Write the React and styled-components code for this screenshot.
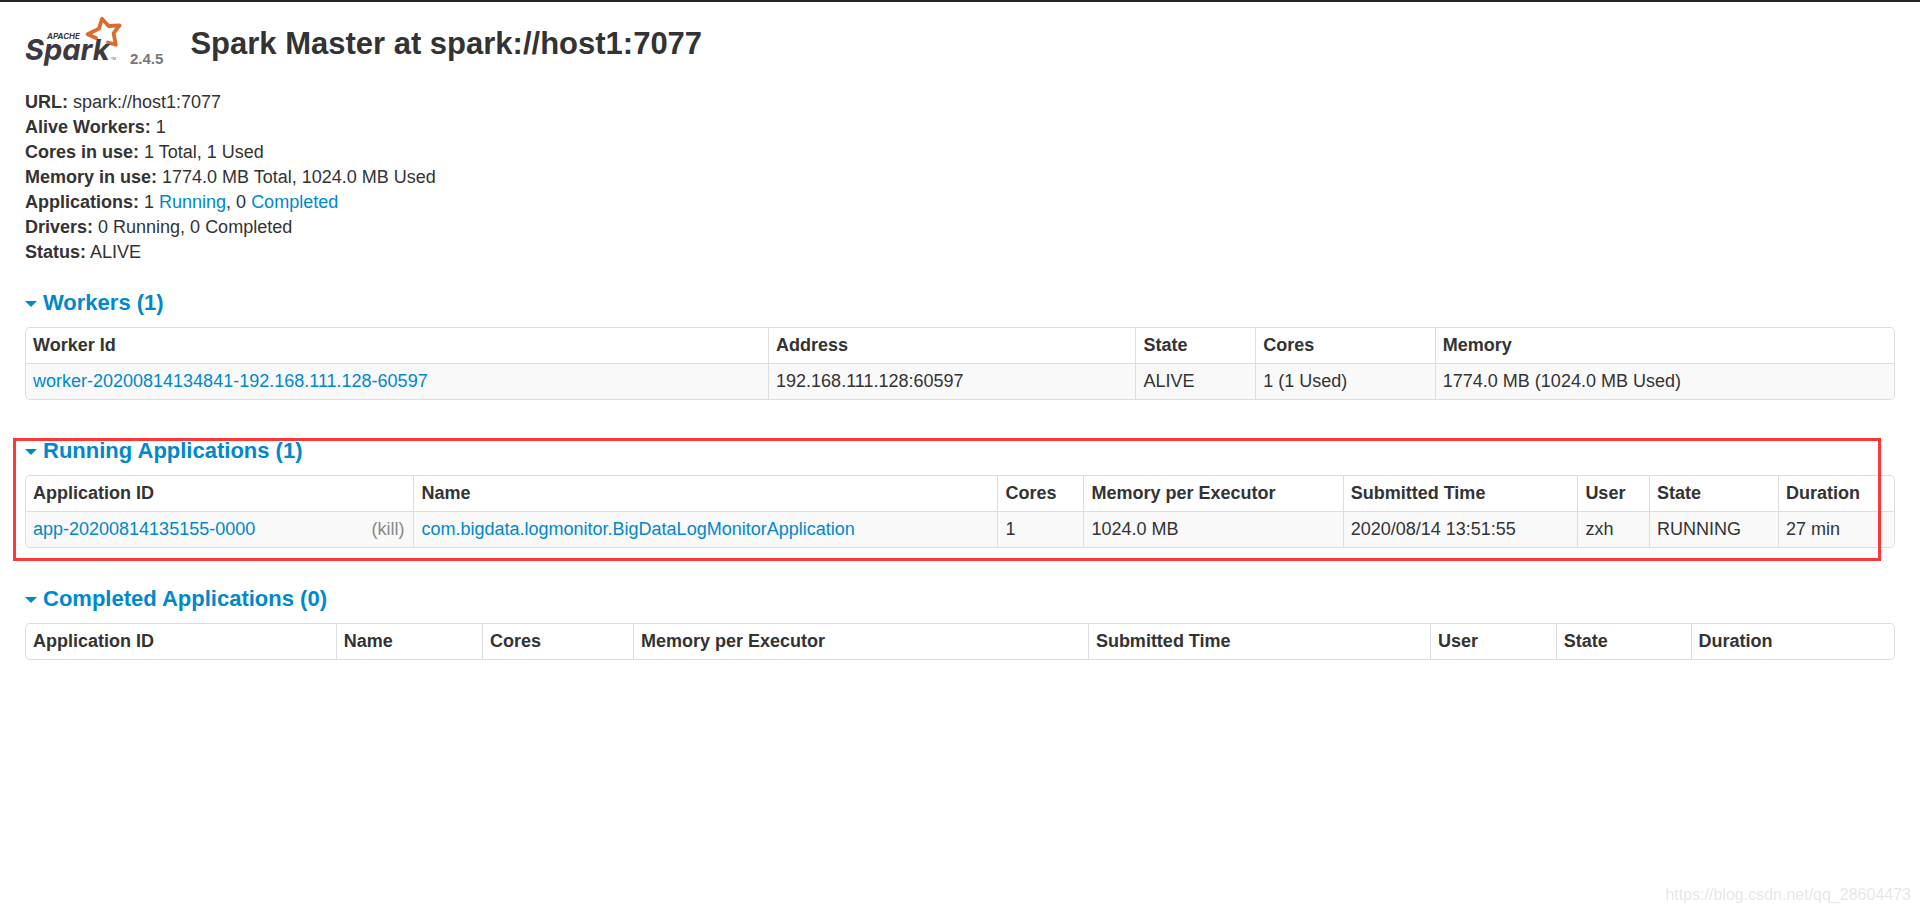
import styled, { createGlobalStyle } from "styled-components";

const workers = [
  {
    id: "worker-20200814134841-192.168.111.128-60597",
    address: "192.168.111.128:60597",
    state: "ALIVE",
    cores: "1 (1 Used)",
    memory: "1774.0 MB (1024.0 MB Used)",
  },
];

const runningApps = [
  {
    id: "app-20200814135155-0000",
    name: "com.bigdata.logmonitor.BigDataLogMonitorApplication",
    cores: "1",
    memory: "1024.0 MB",
    submitted: "2020/08/14 13:51:55",
    user: "zxh",
    state: "RUNNING",
    duration: "27 min",
  },
];

const workerHeaders = ["Worker Id", "Address", "State", "Cores", "Memory"];

const appHeaders = [
  "Application ID",
  "Name",
  "Cores",
  "Memory per Executor",
  "Submitted Time",
  "User",
  "State",
  "Duration",
];

function SparkLogo() {
  return (
    <svg width="98" height="54" viewBox="0 0 98 54" role="img" aria-label="Apache Spark">
      <path
        d="M83 28.5 L90.8 30.8 L88.6 19.2 L94.6 11.4 L83.6 12 L77 4.8 L74 14.6 L62.6 20.2 L71 24"
        fill="none"
        stroke="#dd6b2b"
        strokeWidth="3.8"
        strokeLinejoin="round"
        strokeLinecap="round"
      />
      <text x="22" y="25" fontFamily="Inter, sans-serif" fontSize="8" fontWeight="700" fontStyle="italic" fill="#3c3a3e">
        APACHE
      </text>
      <text x="0" y="46" fontFamily="Inter, sans-serif" fontSize="29" fontWeight="700" fontStyle="italic" fill="#3c3a3e">
        Spark
      </text>
      <text x="86" y="46" fontFamily="Inter, sans-serif" fontSize="3" fill="#3c3a3e">
        TM
      </text>
    </svg>
  );
}

function DataTable({ headers, children }) {
  return (
    <Table>
      <thead>
        <tr>
          {headers.map((header) => (
            <HeadCell key={header} scope="col">
              {header}
            </HeadCell>
          ))}
        </tr>
      </thead>
      <tbody>{children}</tbody>
    </Table>
  );
}

function SectionTitle({ children }) {
  return (
    <Title>
      <Toggle type="button">
        <Caret />
        {children}
      </Toggle>
    </Title>
  );
}

function App() {
  return (
    <>
      <GlobalStyle />
      <Page>
        <Header>
          <Brand href="#">
            <SparkLogo />
            <Version>2.4.5</Version>
          </Brand>
          <PageTitle>Spark Master at spark://host1:7077</PageTitle>
        </Header>

        <Summary>
          <li>
            <strong>URL:</strong> spark://host1:7077
          </li>
          <li>
            <strong>Alive Workers:</strong> 1
          </li>
          <li>
            <strong>Cores in use:</strong> 1 Total, 1 Used
          </li>
          <li>
            <strong>Memory in use:</strong> 1774.0 MB Total, 1024.0 MB Used
          </li>
          <li>
            <strong>Applications:</strong> 1 <Link href="#running">Running</Link>, 0{" "}
            <Link href="#completed">Completed</Link>
          </li>
          <li>
            <strong>Drivers:</strong> 0 Running, 0 Completed
          </li>
          <li>
            <strong>Status:</strong> ALIVE
          </li>
        </Summary>

        <Section>
          <SectionTitle>Workers (1)</SectionTitle>
          <DataTable headers={workerHeaders}>
            {workers.map((worker) => (
              <tr key={worker.id}>
                <Cell>
                  <Link href="#">{worker.id}</Link>
                </Cell>
                <Cell>{worker.address}</Cell>
                <Cell>{worker.state}</Cell>
                <Cell>{worker.cores}</Cell>
                <Cell>{worker.memory}</Cell>
              </tr>
            ))}
          </DataTable>
        </Section>

        <Section id="running">
          <SectionTitle>Running Applications (1)</SectionTitle>
          <DataTable headers={appHeaders}>
            {runningApps.map((app) => (
              <tr key={app.id}>
                <Cell>
                  <Link href="#">{app.id}</Link>
                  <KillLink href="#">(kill)</KillLink>
                </Cell>
                <Cell>
                  <Link href="#">{app.name}</Link>
                </Cell>
                <Cell>{app.cores}</Cell>
                <Cell>{app.memory}</Cell>
                <Cell>{app.submitted}</Cell>
                <Cell>{app.user}</Cell>
                <Cell>{app.state}</Cell>
                <Cell>{app.duration}</Cell>
              </tr>
            ))}
          </DataTable>
          <Highlight />
        </Section>

        <Section id="completed">
          <SectionTitle>Completed Applications (0)</SectionTitle>
          <DataTable headers={appHeaders} />
        </Section>
      </Page>
      <Watermark>https://blog.csdn.net/qq_28604473</Watermark>
    </>
  );
}

export default App;

const GlobalStyle = createGlobalStyle`
  * {
    box-sizing: border-box;
  }

  body {
    margin: 0;
    background: #ffffff;
    color: #333333;
    font-family: "Liberation Sans", Arial, sans-serif;
    font-size: 18px;
    line-height: 25px;
  }
`;

const Page = styled.main`
  border-top: 2px solid #252324;
  padding: 0 25px;
`;

const Header = styled.header`
  display: flex;
  align-items: flex-start;
  gap: 27px;
  padding: 12px 0 3px;
`;

const Brand = styled.a`
  display: flex;
  align-items: flex-end;
  gap: 7px;
  color: #777777;
  text-decoration: none;
`;

const Version = styled.span`
  font-size: 15px;
  font-weight: bold;
  line-height: 18px;
`;

const PageTitle = styled.h3`
  margin: 0;
  font-size: 31px;
  line-height: 60px;
`;

const Summary = styled.ul`
  list-style: none;
  margin: 13px 0 25px;
  padding: 0;
`;

const Link = styled.a`
  color: #0088cc;
  text-decoration: none;
  &:hover {
    text-decoration: underline;
  }
`;

const KillLink = styled(Link)`
  float: right;
  margin: 0 2px 0 26px;
  color: #888888;
`;

const Section = styled.section`
  position: relative;
  margin-bottom: 38px;
`;

const Title = styled.h4`
  margin: 0 0 12px;
  font-size: 22px;
  line-height: 25px;
`;

const Toggle = styled.button`
  display: flex;
  align-items: center;
  gap: 6px;
  padding: 0;
  border: none;
  background: none;
  color: #0088cc;
  font: inherit;
  cursor: pointer;
`;

const Caret = styled.span`
  margin-top: 3px;
  border-top: 6px solid #0088cc;
  border-left: 6px solid transparent;
  border-right: 6px solid transparent;
`;

const Table = styled.table`
  width: 100%;
  border: 1px solid #dddddd;
  border-left: none;
  border-radius: 5px;
  border-collapse: separate;
  border-spacing: 0;

  thead tr:first-child > th:first-child {
    border-top-left-radius: 5px;
  }
  thead:has(+ tbody:empty) th:first-child {
    border-bottom-left-radius: 5px;
  }
  tbody tr:last-child > td:first-child {
    border-bottom-left-radius: 5px;
  }
  tbody tr:last-child > td:last-child {
    border-bottom-right-radius: 5px;
  }
`;

const HeadCell = styled.th`
  padding: 5px 7px;
  border-left: 1px solid #dddddd;
  text-align: left;
  font-weight: bold;
`;

const Cell = styled.td`
  padding: 5px 7px;
  border-top: 1px solid #dddddd;
  border-left: 1px solid #dddddd;
  background: #f9f9f9;
`;

const Highlight = styled.div`
  position: absolute;
  top: 0;
  right: 14px;
  bottom: -13px;
  left: -12px;
  border: 3px solid #fe3836;
  pointer-events: none;
`;

const Watermark = styled.div`
  position: fixed;
  right: 9px;
  bottom: 6px;
  color: #e6e6e6;
  font-size: 16px;
`;
